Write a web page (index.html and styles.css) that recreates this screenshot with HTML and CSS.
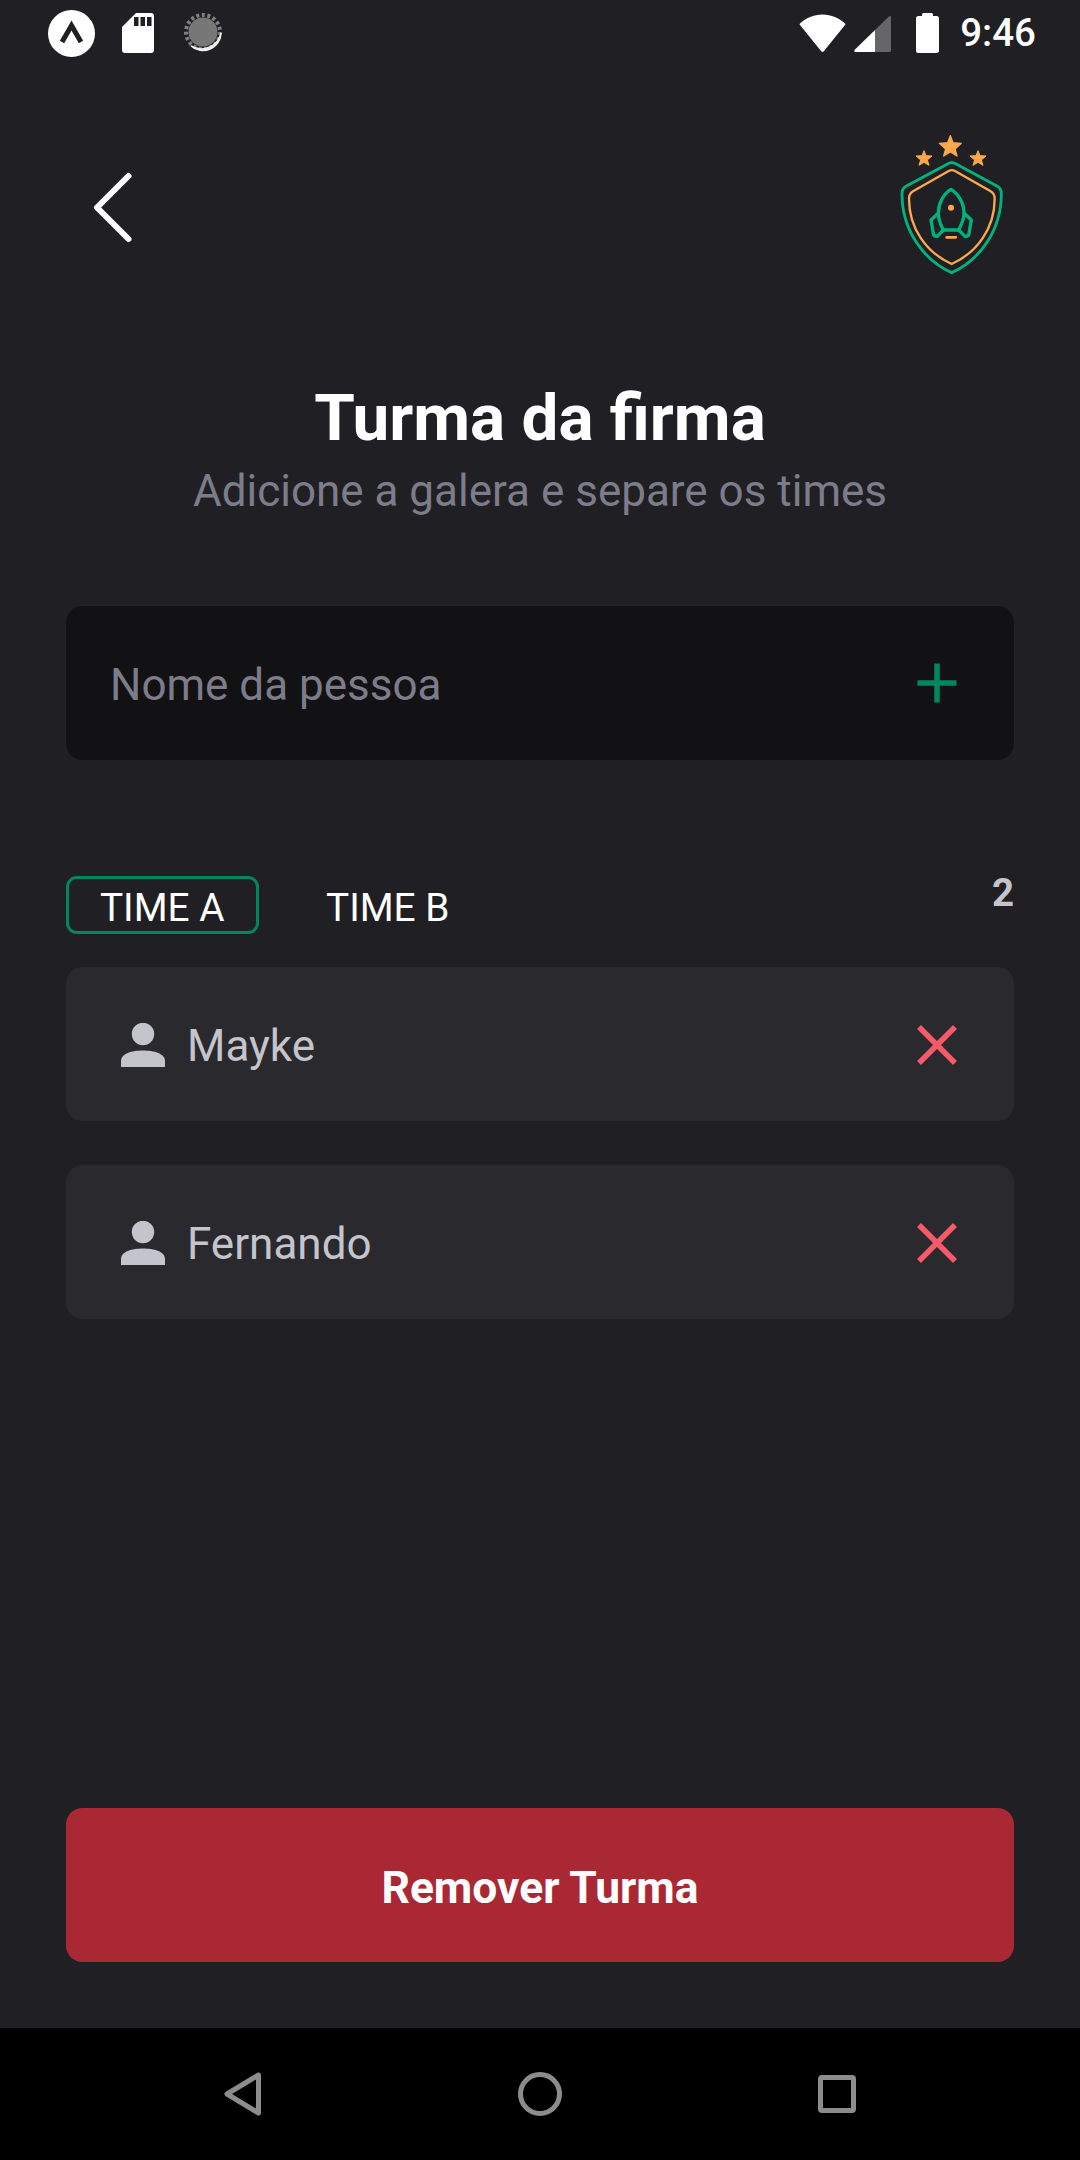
FILE: index.html
```html
<!DOCTYPE html>
<html lang="pt">
<head>
<meta charset="utf-8">
<title>Turma da firma</title>
<link rel="stylesheet" href="styles.css">
</head>
<body>
<div class="screen">
  <div class="status">
    <div class="status-left">
      <svg class="st-expo" viewBox="0 0 47 47"><circle cx="23.5" cy="23.5" r="23.5" fill="#fff"/><path d="M14 32 L23.5 15.5 L33 32" fill="none" stroke="#202024" stroke-width="5"/></svg>
      <svg class="st-sd" viewBox="0 0 32 40"><path fill="#fff" d="M14 0H29a3 3 0 0 1 3 3V37a3 3 0 0 1-3 3H3a3 3 0 0 1-3-3V14Z"/><path fill="#202024" d="M12 4h4.500v9H12zM18.500 4H23v9h-4.500zM25 4h4.500v9H25z"/></svg>
      <svg class="st-spin" viewBox="0 0 40 40"><circle cx="19" cy="19" r="14.500" fill="#777"/><circle cx="19" cy="19" r="17" fill="none" stroke="#808080" stroke-width="4" stroke-dasharray="3 2.600"/><path d="M37 20A18 18 0 0 1 7 33A20 20 0 0 0 37 20Z" fill="#eee" stroke="#eee" stroke-width="1.500"/></svg>
    </div>
    <div class="status-right">
      <svg class="st-wifi" viewBox="0 0 47 38"><path fill="#fff" d="M1 9.500C7 4 14.500 0.500 23.500 0.500S40 4 46 9.500a1 1 0 0 1 0 1.500L25 37a2 2 0 0 1-3 0L1 11a1 1 0 0 1 0-1.500Z"/></svg>
      <svg class="st-signal" viewBox="0 0 37 37"><path fill="#666" d="M21 15 L35 1.500Q37 0 37 2.500V35.500Q37 37 35.500 37H21Z"/><path fill="#fff" d="M21 15V37H2Q-1 37 1 34.500Z"/></svg>
      <svg class="st-batt" viewBox="0 0 23 40"><path fill="#fff" d="M6 3V1.500Q6 0 7.500 0H15.500Q17 0 17 1.500V3H20.500Q23 3 23 5.500V37.500Q23 40 20.500 40H2.500Q0 40 0 37.500V5.500Q0 3 2.500 3Z"/></svg>
      <span class="clock">9:46</span>
    </div>
  </div>

  <div class="content">
    <div class="header">
      <svg class="back" viewBox="0 0 120 120"><path d="M68.500 26 L37 57.500 L68.500 89" fill="none" stroke="#fff" stroke-width="6" stroke-linecap="round" stroke-linejoin="round"/></svg>
      <svg class="logo" viewBox="0 0 480 480">
        <path d="M271 47 L279 68 L304 70 L285 87 L291 108 L271 96 L251 108 L257 87 L238 70 L263 68Z" fill="#FBA94C" stroke="#FBA94C" stroke-width="4" stroke-linejoin="round"/>
        <path d="M192 92 L198 107 L216 108 L202 120 L207 136 L192 127 L177 136 L182 120 L168 108 L186 107Z" fill="#FBA94C" stroke="#FBA94C" stroke-width="3" stroke-linejoin="round"/>
        <path d="M354 92 L360 107 L378 108 L364 120 L369 136 L354 127 L339 136 L344 120 L330 108 L348 107Z" fill="#FBA94C" stroke="#FBA94C" stroke-width="3" stroke-linejoin="round"/>
        <path d="M264 131 Q275 125 287 131 L412 199 Q424 206 424 222 C424 330 360 420 275 458 C190 420 126 330 126 222 Q126 206 138 199Z" fill="none" stroke="#00B37E" stroke-width="8.500" stroke-linejoin="round"/>
        <path d="M266 153 Q275 148 285 153 L392 214 Q404 221 404 236 C404 326 350 398 275 432 C200 398 147 326 147 236 Q147 221 159 214Z" fill="none" stroke="#FBA94C" stroke-width="7" stroke-linejoin="round"/>
        <path d="M273 208 C250 222 235 250 235 280 C235 298 242 315 250 330 H296 C304 315 312 298 312 280 C312 250 296 222 273 208Z" fill="none" stroke="#00B37E" stroke-width="10" stroke-linejoin="round"/>
        <path d="M237 277 L213 300 L220 340 Q221 350 232 349 L250 330" fill="none" stroke="#00B37E" stroke-width="10" stroke-linejoin="round"/>
        <path d="M310 277 L334 300 L327 340 Q326 350 315 349 L296 330" fill="none" stroke="#00B37E" stroke-width="10" stroke-linejoin="round"/>
        <circle cx="273" cy="263" r="9" fill="#FBA94C"/>
        <path d="M260 352H287" stroke="#FBA94C" stroke-width="8" stroke-linecap="round"/>
      </svg>
    </div>

    <div class="heading">
      <h1 class="title">Turma da firma</h1>
      <p class="subtitle">Adicione a galera e separe os times</p>
    </div>

    <form class="add">
      <input class="add-input" type="text" placeholder="Nome da pessoa">
      <svg class="icon" viewBox="0 0 44 44"><path d="M22 2.500V41.500M2.500 22H41.500" stroke="#00875F" stroke-width="5.500"/></svg>
    </form>

    <div class="tabs-row">
      <div class="tabs">
        <div class="tab tab-active">TIME A</div>
        <div class="tab">TIME B</div>
      </div>
      <span class="count">2</span>
    </div>

    <div class="list">
      <div class="card">
        <svg class="person" viewBox="0 0 44 44"><circle cx="22" cy="11" r="11.200" fill="#C4C4CC"/><path fill="#C4C4CC" d="M0 44V38C0 30.500 11 27.500 22 27.500S44 30.500 44 38V44Z"/></svg>
        <span class="name">Mayke</span>
        <svg class="icon" viewBox="0 0 44 44"><path d="M4 4 L40 40M40 4 L4 40" stroke="#F75A68" stroke-width="5.500"/></svg>
      </div>
      <div class="card">
        <svg class="person" viewBox="0 0 44 44"><circle cx="22" cy="11" r="11.200" fill="#C4C4CC"/><path fill="#C4C4CC" d="M0 44V38C0 30.500 11 27.500 22 27.500S44 30.500 44 38V44Z"/></svg>
        <span class="name">Fernando</span>
        <svg class="icon" viewBox="0 0 44 44"><path d="M4 4 L40 40M40 4 L4 40" stroke="#F75A68" stroke-width="5.500"/></svg>
      </div>
    </div>

    <button class="remove" type="button">Remover Turma</button>
  </div>

  <div class="nav">
    <svg class="nav-back" viewBox="0 0 38 44"><path d="M34.500 3 L3 22 L34.500 41Z" fill="none" stroke="#8c8c8c" stroke-width="5" stroke-linejoin="round"/></svg>
    <svg class="nav-home" viewBox="0 0 44 44"><circle cx="22" cy="22" r="19.500" fill="none" stroke="#8c8c8c" stroke-width="5"/></svg>
    <svg class="nav-square" viewBox="0 0 38 38"><rect x="2.500" y="2.500" width="33" height="33" rx="1.500" fill="none" stroke="#8c8c8c" stroke-width="5"/></svg>
  </div>
</div>
</body>
</html>
```
FILE: styles.css
```css
* { box-sizing: border-box; }
html, body { margin: 0; padding: 0; }
body { background: #202024; font-family: Roboto, "Noto Sans", sans-serif; }

.screen {
  width: 1080px;
  height: 2160px;
  display: flex;
  flex-direction: column;
  background: #202024;
  overflow: hidden;
}

/* status bar */
.status {
  height: 66px;
  flex: none;
  display: flex;
  align-items: center;
  justify-content: space-between;
  padding: 0 44px 0 48px;
}
.status-left, .status-right { display: flex; align-items: center; }
.st-expo { width: 47px; height: 47px; }
.st-sd { width: 32px; height: 40px; margin-left: 27px; }
.st-spin { width: 40px; height: 40px; margin-left: 30px; }
.st-wifi { width: 47px; height: 38px; }
.st-signal { width: 37px; height: 37px; margin-left: 8px; }
.st-batt { width: 23px; height: 40px; margin-left: 25px; }
.clock { margin-left: 21px; color: #fff; font-size: 38.500px; font-weight: 500; line-height: 46px; }

/* main column */
.content {
  flex: 1;
  display: flex;
  flex-direction: column;
  padding: 0 66px 66px;
}
.header {
  display: flex;
  justify-content: space-between;
  align-items: flex-start;
  margin: 54px -6px 0 -6px;
}
.back { width: 120px; height: 120px; margin-top: 30px; }
.logo { width: 160px; height: 160px; }

.heading { margin-top: 99px; text-align: center; }
.title { margin: 0; color: #fff; font-size: 65.600px; font-weight: 700; line-height: 77px; }
.subtitle { margin: 9px 0 0; color: #7C7C8A; font-size: 44px; line-height: 52px; }

.add {
  margin-top: 89px;
  height: 154px;
  flex: none;
  display: flex;
  align-items: center;
  padding: 0 55px 0 44px;
  background: #121214;
  border-radius: 16.500px;
}
.add-input {
  flex: 1;
  min-width: 0;
  padding: 3px 0 0;
  border: 0;
  outline: 0;
  background: transparent;
  color: #fff;
  font: 400 44px Roboto, sans-serif;
}
.add-input::placeholder { color: #7C7C8A; opacity: 1; }
.icon { width: 44px; height: 44px; flex: none; }

.tabs-row {
  margin-top: 116px;
  display: flex;
  justify-content: space-between;
  align-items: flex-start;
}
.tabs { display: flex; gap: 33px; }
.tab {
  width: 192.500px;
  height: 57.750px;
  display: flex;
  align-items: center;
  justify-content: center;
  padding-top: 5px;
  color: #fff;
  font-size: 38.800px;
  border: 3px solid transparent;
  border-radius: 11px;
}
.tab-active { border-color: #00875F; }
.count { color: #C4C4CC; font-size: 38.500px; font-weight: 700; line-height: 34px; }

.list { margin-top: 33px; display: flex; flex-direction: column; gap: 44px; }
.card {
  height: 154px;
  display: flex;
  align-items: center;
  padding: 2px 55px 0;
  background: #29292E;
  border-radius: 16.500px;
}
.person { width: 44px; height: 44px; flex: none; }
.name { flex: 1; margin-left: 22px; padding-top: 2px; color: #C4C4CC; font-size: 44px; }

.remove {
  margin-top: auto;
  height: 154px;
  flex: none;
  padding: 6px 0 0;
  border: 0;
  border-radius: 16.500px;
  background: #AA2834;
  color: #fff;
  font: 700 44.400px Roboto, sans-serif;
}

/* android nav */
.nav {
  height: 132px;
  flex: none;
  background: #000;
  display: flex;
  align-items: center;
  justify-content: space-between;
  padding: 0 224px;
}
.nav-back { width: 38px; height: 44px; }
.nav-home { width: 44px; height: 44px; }
.nav-square { width: 38px; height: 38px; }
```
